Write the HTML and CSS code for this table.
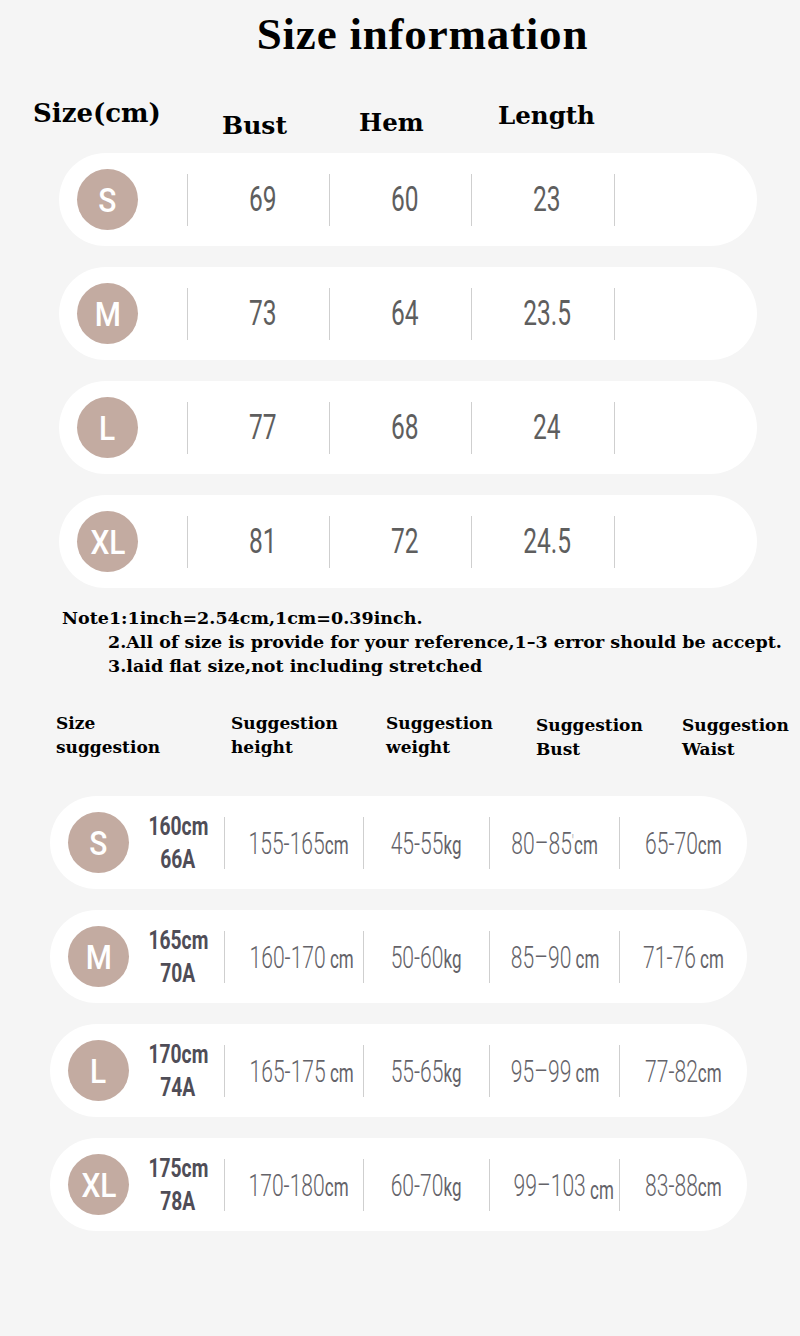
FILE: index.html
```html
<!DOCTYPE html>
<html>
<head>
<meta charset="utf-8">
<link rel="stylesheet" href="styles.css">
</head>
<body>
<div class="page">
  <h1 class="title">Size information</h1>

  <div class="head1">
    <div class="h h-size">Size(cm)</div>
    <div class="h h-bust">Bust</div>
    <div class="h h-hem">Hem</div>
    <div class="h h-length">Length</div>
  </div>

  <div class="table1">
    <div class="row1">
      <div class="lead"><span class="badge"><b>S</b></span></div>
      <div class="cell"><i class="sep"></i><span class="val"><b>69</b></span></div>
      <div class="cell"><i class="sep"></i><span class="val"><b>60</b></span></div>
      <div class="cell"><i class="sep"></i><span class="val"><b>23</b></span></div>
      <div class="cell"><i class="sep"></i></div>
    </div>
    <div class="row1">
      <div class="lead"><span class="badge"><b>M</b></span></div>
      <div class="cell"><i class="sep"></i><span class="val"><b>73</b></span></div>
      <div class="cell"><i class="sep"></i><span class="val"><b>64</b></span></div>
      <div class="cell"><i class="sep"></i><span class="val"><b>23.5</b></span></div>
      <div class="cell"><i class="sep"></i></div>
    </div>
    <div class="row1">
      <div class="lead"><span class="badge"><b>L</b></span></div>
      <div class="cell"><i class="sep"></i><span class="val"><b>77</b></span></div>
      <div class="cell"><i class="sep"></i><span class="val"><b>68</b></span></div>
      <div class="cell"><i class="sep"></i><span class="val"><b>24</b></span></div>
      <div class="cell"><i class="sep"></i></div>
    </div>
    <div class="row1">
      <div class="lead"><span class="badge"><b>XL</b></span></div>
      <div class="cell"><i class="sep"></i><span class="val"><b>81</b></span></div>
      <div class="cell"><i class="sep"></i><span class="val"><b>72</b></span></div>
      <div class="cell"><i class="sep"></i><span class="val"><b>24.5</b></span></div>
      <div class="cell"><i class="sep"></i></div>
    </div>
  </div>

  <div class="notes">
    <p class="note first">Note1:1inch=2.54cm,1cm=0.39inch.</p>
    <p class="note">2.All of size is provide for your reference,1–3 error should be accept.</p>
    <p class="note">3.laid flat size,not including stretched</p>
  </div>

  <div class="head2">
    <div class="h2 c1">Size<br>suggestion</div>
    <div class="h2 c2">Suggestion<br>height</div>
    <div class="h2 c3">Suggestion<br>weight</div>
    <div class="h2 c4 low">Suggestion<br>Bust</div>
    <div class="h2 c5 low">Suggestion<br>Waist</div>
  </div>

  <div class="table2">
    <div class="row2">
      <div class="lead2"><span class="badge"><b>S</b></span><span class="label"><b>160cm</b><b>66A</b></span></div>
      <div class="cell"><i class="sep"></i><span class="val2"><b>155-165<small>cm</small></b></span></div>
      <div class="cell"><i class="sep"></i><span class="val2"><b>45-55<small>kg</small></b></span></div>
      <div class="cell"><i class="sep"></i><span class="val2"><b>80–85<small class="tick">'</small><small>cm</small></b></span></div>
      <div class="cell"><i class="sep"></i><span class="val2"><b>65-70<small>cm</small></b></span></div>
    </div>
    <div class="row2">
      <div class="lead2"><span class="badge"><b>M</b></span><span class="label"><b>165cm</b><b>70A</b></span></div>
      <div class="cell"><i class="sep"></i><span class="val2"><b>160-170<small> cm</small></b></span></div>
      <div class="cell"><i class="sep"></i><span class="val2"><b>50-60<small>kg</small></b></span></div>
      <div class="cell"><i class="sep"></i><span class="val2"><b>85–90<small> cm</small></b></span></div>
      <div class="cell"><i class="sep"></i><span class="val2"><b>71-76<small> cm</small></b></span></div>
    </div>
    <div class="row2">
      <div class="lead2"><span class="badge"><b>L</b></span><span class="label"><b>170cm</b><b>74A</b></span></div>
      <div class="cell"><i class="sep"></i><span class="val2"><b>165-175<small> cm</small></b></span></div>
      <div class="cell"><i class="sep"></i><span class="val2"><b>55-65<small>kg</small></b></span></div>
      <div class="cell"><i class="sep"></i><span class="val2"><b>95–99<small> cm</small></b></span></div>
      <div class="cell"><i class="sep"></i><span class="val2"><b>77-82<small>cm</small></b></span></div>
    </div>
    <div class="row2">
      <div class="lead2"><span class="badge"><b>XL</b></span><span class="label"><b>175cm</b><b>78A</b></span></div>
      <div class="cell"><i class="sep"></i><span class="val2"><b>170-180<small>cm</small></b></span></div>
      <div class="cell"><i class="sep"></i><span class="val2"><b>60-70<small>kg</small></b></span></div>
      <div class="cell"><i class="sep"></i><span class="val2"><b>99–103<small class="low"> cm</small></b></span></div>
      <div class="cell"><i class="sep"></i><span class="val2"><b>83-88<small>cm</small></b></span></div>
    </div>
  </div>
</div>
</body>
</html>
```

FILE: styles.css
```css
html, body {
  margin: 0;
  padding: 0;
  background: #f5f5f5;
}
.page {
  width: 800px;
  height: 1336px;
  padding-top: 12px;
  box-sizing: border-box;
  overflow: hidden;
}
.title {
  margin: 0;
  padding-left: 45px;
  font-family: "Liberation Serif", serif;
  font-weight: bold;
  font-size: 45px;
  line-height: 44px;
  letter-spacing: 0.8px;
  text-align: center;
  color: #000;
}

/* top headers */
.head1 {
  display: flex;
  align-items: flex-start;
  height: 97px;
  padding-left: 33px;
}
.h {
  font-family: "DejaVu Serif", serif;
  font-weight: bold;
  line-height: 30px;
  color: #000;
  white-space: nowrap;
}
.h-size { width: 189px; font-size: 26px; margin-top: 42px; }
.h-bust { width: 137px; font-size: 25px; margin-top: 55px; }
.h-hem { width: 139px; font-size: 24.5px; margin-top: 52px; }
.h-length { font-size: 24.5px; margin-top: 45px; }

/* tables */
.table1 {
  display: flex;
  flex-direction: column;
  gap: 21px;
  padding: 0 43px 0 59px;
}
.row1, .row2 {
  display: grid;
  align-items: center;
  height: 93px;
  background: #fff;
  border-radius: 47px;
}
.row1 { grid-template-columns: 128px 142px 142px 143px 1fr; }

.lead, .lead2 {
  display: flex;
  align-items: center;
  height: 100%;
}
.badge {
  display: flex;
  align-items: center;
  justify-content: center;
  flex: 0 0 61px;
  width: 61px;
  height: 61px;
  margin-left: 18px;
  border-radius: 50%;
  background: #c3aba1;
}
.badge b {
  display: inline-block;
  font-family: Roboto, "Liberation Sans", sans-serif;
  font-weight: 500;
  font-size: 34px;
  line-height: 1;
  color: #fff;
  transform: scaleX(0.88);
}
.cell {
  display: flex;
  align-items: center;
  height: 100%;
}
.sep {
  display: block;
  flex: 0 0 1px;
  width: 1px;
  height: 52px;
  background: #cfcfcf;
}
.val {
  flex: 1;
  display: flex;
  justify-content: center;
  padding-left: 8px;
}
.val b {
  display: inline-block;
  flex-shrink: 0;
  font-family: Roboto, "Liberation Sans", sans-serif;
  font-weight: 400;
  font-size: 35px;
  line-height: 1;
  color: #5e5e5e;
  white-space: nowrap;
  transform: scaleX(0.7);
}

/* notes */
.notes {
  margin-top: 18px;
}
.note {
  margin: 0;
  padding-left: 108px;
  font-family: "DejaVu Serif", serif;
  font-weight: bold;
  font-size: 17.5px;
  line-height: 24px;
  color: #000;
  white-space: nowrap;
}
.note.first { padding-left: 62px; }

/* second headers */
.head2 {
  display: flex;
  align-items: flex-start;
  height: 85px;
  margin-top: 33px;
  padding-left: 56px;
}
.h2 {
  font-family: "DejaVu Serif", serif;
  font-weight: bold;
  font-size: 17px;
  line-height: 24px;
  color: #000;
  white-space: nowrap;
}
.h2.low { margin-top: 2px; }
.c1 { width: 175px; }
.c2 { width: 155px; }
.c3 { width: 150px; }
.c4 { width: 146px; }

/* second table */
.table2 {
  display: flex;
  flex-direction: column;
  gap: 21px;
  padding: 0 53px 0 50px;
}
.row2 { grid-template-columns: 174px 139px 126px 130px 1fr; }
.label {
  display: flex;
  flex-direction: column;
  align-items: center;
  width: 60px;
  margin-left: 19px;
}
.label b {
  display: inline-block;
  font-family: Roboto, "Liberation Sans", sans-serif;
  font-weight: 700;
  font-size: 26px;
  line-height: 33px;
  color: #4f4d57;
  white-space: nowrap;
  transform: scaleX(0.74);
}
.val2 {
  flex: 1;
  display: flex;
  justify-content: center;
  padding-top: 2px;
}
.val2 b {
  display: inline-block;
  flex-shrink: 0;
  font-family: Roboto, "Liberation Sans", sans-serif;
  font-weight: 300;
  font-size: 31px;
  line-height: 1;
  color: #646369;
  white-space: nowrap;
  transform: scaleX(0.68);
}
.val2 small {
  font-size: 25px;
  font-weight: 400;
  white-space: pre;
}
.val2 small.tick {
  font-size: 18px;
  color: #b5b5b5;
  vertical-align: 6px;
}
.val2 small.low {
  position: relative;
  top: 3px;
}
```
